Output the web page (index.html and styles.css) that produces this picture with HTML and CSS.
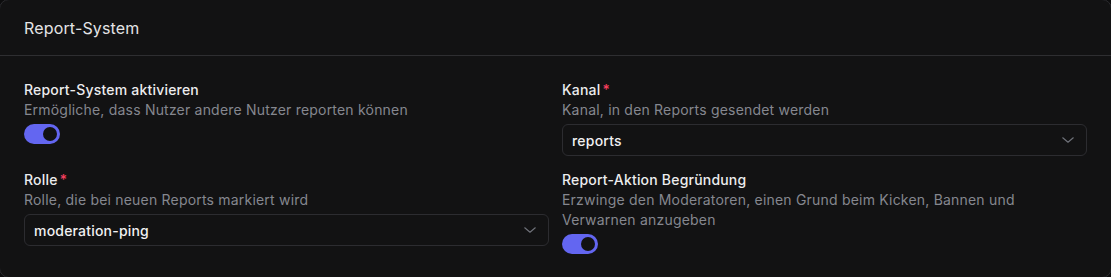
FILE: index.html
```html
<!DOCTYPE html>
<html lang="de">
<head>
    <meta charset="UTF-8">
    <meta name="viewport" content="width=device-width, initial-scale=1.0">
    <title>Report-System</title>
    <link rel="stylesheet" href="styles.css">
</head>
<body>
    <div class="card">
        <div class="card-header">Report-System</div>

        <div class="card-body">
            <div class="field">
                <div class="field-label">Report-System aktivieren</div>
                <div class="field-desc">Ermögliche, dass Nutzer andere Nutzer reporten können</div>
                <div class="toggle on"><span class="knob"></span></div>
            </div>

            <div class="field">
                <div class="field-label">Kanal<span class="required">*</span></div>
                <div class="field-desc">Kanal, in den Reports gesendet werden</div>
                <div class="select">
                    <span>reports</span>
                    <svg class="chevron" width="18" height="18" viewBox="0 0 24 24" fill="none" stroke="currentColor" stroke-width="1.5" stroke-linecap="round" stroke-linejoin="round"><path d="M5 9l7 6 7-6"/></svg>
                </div>
            </div>

            <div class="field">
                <div class="field-label">Rolle<span class="required">*</span></div>
                <div class="field-desc">Rolle, die bei neuen Reports markiert wird</div>
                <div class="select">
                    <span>moderation-ping</span>
                    <svg class="chevron" width="18" height="18" viewBox="0 0 24 24" fill="none" stroke="currentColor" stroke-width="1.5" stroke-linecap="round" stroke-linejoin="round"><path d="M5 9l7 6 7-6"/></svg>
                </div>
            </div>

            <div class="field">
                <div class="field-label">Report-Aktion Begründung</div>
                <div class="field-desc">Erzwinge den Moderatoren, einen Grund beim Kicken, Bannen und Verwarnen anzugeben</div>
                <div class="toggle on"><span class="knob"></span></div>
            </div>
        </div>
    </div>
</body>
</html>
```

FILE: styles.css
```css
html, body {
    margin: 0;
    background-color: #0c0c0d;
    overflow: hidden;
}

body {
    font-family: Inter, "Noto Sans", sans-serif;
    color: #e6e6e8;
}

.card {
    margin: -1px;
    background-color: #121213;
    border: 1px solid #2a2a2e;
    border-radius: 10px;
    min-height: 277px;
}

.card-header {
    height: 55px;
    padding: 0 24px;
    display: flex;
    align-items: center;
    font-size: 16px;
    letter-spacing: 0.15px;
    color: #e4e4e6;
    border-bottom: 1px solid #2e2e31;
}

.card-body {
    display: grid;
    grid-template-columns: 1fr 1fr;
    column-gap: 13px;
    row-gap: 14px;
    padding: 24px 24px 20px 24px;
}

.field {
    display: flex;
    flex-direction: column;
    align-items: flex-start;
}

.field-label {
    font-size: 14px;
    font-weight: 500;
    letter-spacing: 0.2px;
    line-height: 20px;
    color: #ececee;
}

.required {
    color: #f43f5e;
    margin-left: 2px;
}

.field-desc {
    font-size: 14px;
    letter-spacing: 0.2px;
    line-height: 20px;
    color: #85878f;
    margin-bottom: 4px;
}

.toggle {
    width: 36px;
    height: 20px;
    border-radius: 10px;
    background-color: #3f3f46;
    position: relative;
}

.toggle.on {
    background-color: #6366f1;
}

.knob {
    position: absolute;
    top: 3px;
    left: 3px;
    width: 14px;
    height: 14px;
    border-radius: 50%;
    background-color: #121213;
}

.toggle.on .knob {
    left: 19px;
}

.select {
    box-sizing: border-box;
    width: 100%;
    height: 32px;
    padding: 0 9px 0 9px;
    border: 1px solid #2c2c30;
    border-radius: 6px;
    display: flex;
    align-items: center;
    justify-content: space-between;
    font-size: 14px;
    font-weight: 500;
    letter-spacing: 0.2px;
    color: #f0f0f2;
}

.chevron {
    color: #6f727a;
}
```
